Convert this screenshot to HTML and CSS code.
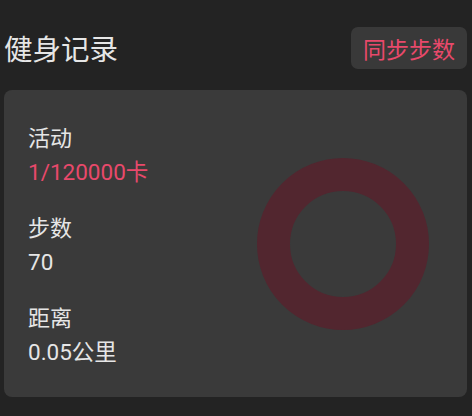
FILE: index.html
```html
<!DOCTYPE html>
<html lang="zh">
<head>
<meta charset="utf-8">
<link rel="stylesheet" href="styles.css">
</head>
<body>
<div class="page">
  <header class="header">
    <h1 class="title">健身记录</h1>
    <button class="sync">同步步数</button>
  </header>
  <section class="card">
    <div class="stats">
      <div class="stat">
        <div class="label">活动</div>
        <div class="value accent">1/120000卡</div>
      </div>
      <div class="stat">
        <div class="label">步数</div>
        <div class="value">70</div>
      </div>
      <div class="stat">
        <div class="label">距离</div>
        <div class="value">0.05公里</div>
      </div>
    </div>
    <svg class="ring" width="172" height="172" viewBox="0 0 172 172">
      <circle cx="86" cy="86" r="69.5" fill="none" stroke="#52262f" stroke-width="33"/>
    </svg>
  </section>
</div>
</body>
</html>
```
FILE: styles.css
```css
html, body {
  margin: 0;
  padding: 0;
  background: #232323;
}
body {
  font-family: "Roboto", "Noto Sans CJK SC", sans-serif;
  color: #e8e8e8;
}
.page {
  padding: 27px 5px 0 4px;
}
.header {
  display: flex;
  justify-content: space-between;
  align-items: center;
  height: 42px;
}
.title {
  margin: 0;
  font-family: "Noto Sans CJK SC", sans-serif;
  font-weight: 400;
  font-size: 28.5px;
  line-height: 42px;
  color: #e6e6e6;
}
.sync {
  height: 42px;
  padding: 0 12px;
  border: none;
  border-radius: 7px;
  background: #393939;
  color: #e8496b;
  font-family: "Noto Sans CJK SC", sans-serif;
  font-size: 23px;
  line-height: 42px;
}
.card {
  margin-top: 21px;
  background: #3a3a3a;
  border-radius: 8px;
  padding: 28px 38px 27px 24px;
  display: flex;
  justify-content: space-between;
  align-items: center;
}
.stats {
  display: flex;
  flex-direction: column;
  gap: 18px;
}
.label {
  font-family: "Noto Sans CJK SC", sans-serif;
  font-size: 22px;
  line-height: 36px;
  color: #e6e6e6;
}
.value {
  font-size: 22.5px;
  line-height: 36px;
  color: #e6e6e6;
}
.accent {
  color: #e8496b;
}
.ring {
  display: block;
}
```
